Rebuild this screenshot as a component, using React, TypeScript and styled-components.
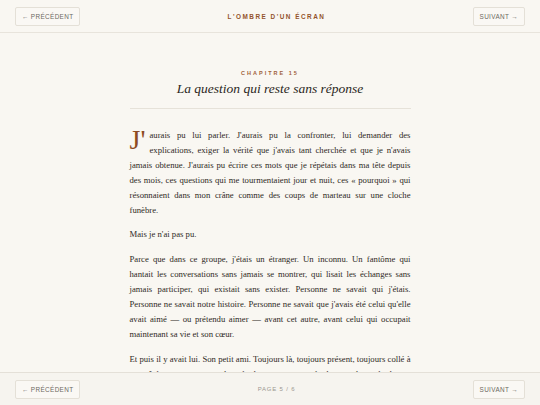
import React from 'react'
import styled, { createGlobalStyle } from 'styled-components'

const GlobalStyle = createGlobalStyle`
  html, body {
    margin: 0;
    padding: 0;
    background: #f9f7f2;
  }
  * {
    box-sizing: border-box;
  }
`

const App: React.FC = () => {
  return (
    <>
      <GlobalStyle />
      <TopBar>
        <NavButton>← Précédent</NavButton>
        <BookTitle>L'ombre d'un écran</BookTitle>
        <NavButton>Suivant →</NavButton>
      </TopBar>
      <Reader>
        <ChapterHead>
          <ChapterLabel>Chapitre 15</ChapterLabel>
          <ChapterTitle>La question qui reste sans réponse</ChapterTitle>
        </ChapterHead>
        <Divider />
        <Para>
          <DropCap>J'</DropCap>aurais pu lui parler. J'aurais pu la confronter, lui demander des explications, exiger la
          vérité que j'avais tant cherchée et que je n'avais jamais obtenue. J'aurais pu écrire ces mots que je répétais
          dans ma tête depuis des mois, ces questions qui me tourmentaient jour et nuit, ces « pourquoi » qui résonnaient
          dans mon crâne comme des coups de marteau sur une cloche funèbre.
        </Para>
        <Para>Mais je n'ai pas pu.</Para>
        <Para>
          Parce que dans ce groupe, j'étais un étranger. Un inconnu. Un fantôme qui hantait les conversations sans jamais
          se montrer, qui lisait les échanges sans jamais participer, qui existait sans exister. Personne ne savait qui
          j'étais. Personne ne savait notre histoire. Personne ne savait que j'avais été celui qu'elle avait aimé — ou
          prétendu aimer — avant cet autre, avant celui qui occupait maintenant sa vie et son cœur.
        </Para>
        <Para>
          Et puis il y avait lui. Son petit ami. Toujours là, toujours présent, toujours collé à ses côtés comme une
          ombre, à chaque message, à chaque photo, à chaque réponse qu'elle laissait dans le fil de la conversation.
        </Para>
      </Reader>
      <BottomBar>
        <NavButton>← Précédent</NavButton>
        <PageCount>Page 5 / 6</PageCount>
        <NavButton>Suivant →</NavButton>
      </BottomBar>
    </>
  )
}

export default App

const BarBase = styled.div`
  display: flex;
  align-items: center;
  justify-content: space-between;
  height: 33px;
  padding: 0 15px;
  font-family: 'Liberation Sans', Arial, sans-serif;
`

const TopBar = styled(BarBase)`
  border-bottom: 1px solid #e8e4dc;
  background: #f9f7f2;
`

const BottomBar = styled(BarBase)`
  position: fixed;
  left: 0;
  right: 0;
  bottom: 0;
  border-top: 1px solid #e4e0d8;
  background: #f6f4ef;
`

const NavButton = styled.button`
  height: 19px;
  padding: 0 6px;
  border: 1px solid #e4e0d7;
  border-radius: 2px;
  background: #faf8f4;
  font-family: 'Liberation Sans', Arial, sans-serif;
  font-size: 6.4px;
  letter-spacing: 0.35px;
  text-transform: uppercase;
  color: #6d685f;
  cursor: pointer;
`

const BookTitle = styled.div`
  font-size: 6.4px;
  font-weight: 700;
  letter-spacing: 1.5px;
  text-transform: uppercase;
  color: #93532c;
`

const PageCount = styled.div`
  font-size: 6px;
  letter-spacing: 0.8px;
  text-transform: uppercase;
  color: #9b978f;
`

const Reader = styled.main`
  width: 281px;
  margin: 0 auto;
  padding: 37px 0 60px;
  font-family: 'Liberation Serif', 'Times New Roman', serif;
`

const ChapterHead = styled.header`
  display: flex;
  flex-direction: column;
  align-items: center;
  gap: 5px;
`

const ChapterLabel = styled.div`
  font-family: 'Liberation Sans', Arial, sans-serif;
  font-size: 5.5px;
  font-weight: 700;
  letter-spacing: 2px;
  text-transform: uppercase;
  color: #a0613a;
`

const ChapterTitle = styled.h1`
  margin: 0;
  font-size: 13.5px;
  font-weight: 400;
  font-style: italic;
  color: #2b2722;
`

const Divider = styled.hr`
  margin: 11px 0 19px;
  border: 0;
  border-top: 1px solid #e6e2d9;
`

const Para = styled.p`
  margin: 0 0 10px;
  font-size: 8.7px;
  line-height: 14.9px;
  text-align: justify;
  color: #2f2a25;
`

const DropCap = styled.span`
  float: left;
  margin: 1px 4px 0 0;
  font-size: 28px;
  line-height: 22px;
  color: #8e4b21;
`
